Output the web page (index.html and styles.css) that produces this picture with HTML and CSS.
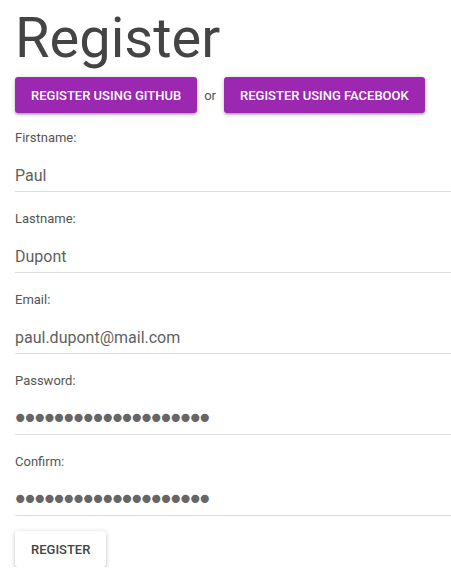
FILE: index.html
```html
<!DOCTYPE html>
<html>
<head>
<meta charset="utf-8">
<link rel="stylesheet" href="styles.css">
</head>
<body>
<div class="page">
  <h1 class="title">Register</h1>
  <div class="social">
    <button class="btn btn-purple">Register using Github</button>
    <span class="or">or</span>
    <button class="btn btn-purple">Register using Facebook</button>
  </div>
  <form class="form">
    <div class="field">
      <label class="label">Firstname:</label>
      <input class="input" type="text" value="Paul">
    </div>
    <div class="field">
      <label class="label">Lastname:</label>
      <input class="input" type="text" value="Dupont">
    </div>
    <div class="field">
      <label class="label">Email:</label>
      <input class="input" type="text" value="paul.dupont@mail.com">
    </div>
    <div class="field">
      <label class="label">Password:</label>
      <input class="input input-pw" type="password" value="abcdefghijklmnopqrst">
    </div>
    <div class="field">
      <label class="label">Confirm:</label>
      <input class="input input-pw" type="password" value="abcdefghijklmnopqrst">
    </div>
    <button class="btn btn-white" type="button">Register</button>
  </form>
</div>
</body>
</html>
```

FILE: styles.css
```css
html, body {
  margin: 0;
  padding: 0;
  background: #fff;
}
body {
  font-family: Roboto, "Liberation Sans", sans-serif;
  overflow: hidden;
}
.page {
  padding: 10px 0 0 15px;
}
.title {
  margin: 0;
  font-size: 56px;
  line-height: 56px;
  font-weight: 400;
  color: #444;
}
.social {
  display: flex;
  align-items: center;
  margin-top: 11px;
}
.btn {
  font-family: Roboto, "Liberation Sans", sans-serif;
  font-size: 13px;
  font-weight: 500;
  text-transform: uppercase;
  height: 36px;
  padding: 0 16px;
  border: none;
  border-radius: 3px;
  cursor: pointer;
}
.btn-purple {
  background: #9c27b0;
  color: #fff;
  box-shadow: 0 1px 5px rgba(0,0,0,0.2), 0 2px 2px rgba(0,0,0,0.14), 0 3px 1px -2px rgba(0,0,0,0.12);
}
.or {
  margin: 0 8px 0 7px;
  font-size: 13px;
  color: #555;
}
.form {
  margin-top: 17px;
}
.field {
  display: flex;
  flex-direction: column;
  margin-bottom: 19px;
}
.label {
  font-size: 13px;
  line-height: 16px;
  color: #555;
  margin-bottom: 13px;
}
.input {
  font-family: Roboto, "Liberation Sans", sans-serif;
  font-size: 16px;
  color: #5f5f5f;
  height: 33px;
  padding: 0;
  border: none;
  border-bottom: 1px solid #ddd;
  outline: none;
  box-sizing: border-box;
  width: 100%;
  background: transparent;
}
.input-pw {
  font-family: "DejaVu Sans", sans-serif;
  font-size: 28px;
  letter-spacing: -6.8px;
  text-indent: -3px;
  color: #666;
}
.btn-white {
  background: #fff;
  color: #444;
  box-shadow: 0 1px 5px rgba(0,0,0,0.2), 0 2px 2px rgba(0,0,0,0.14), 0 3px 1px -2px rgba(0,0,0,0.12);
  margin-top: -4px;
}
```
